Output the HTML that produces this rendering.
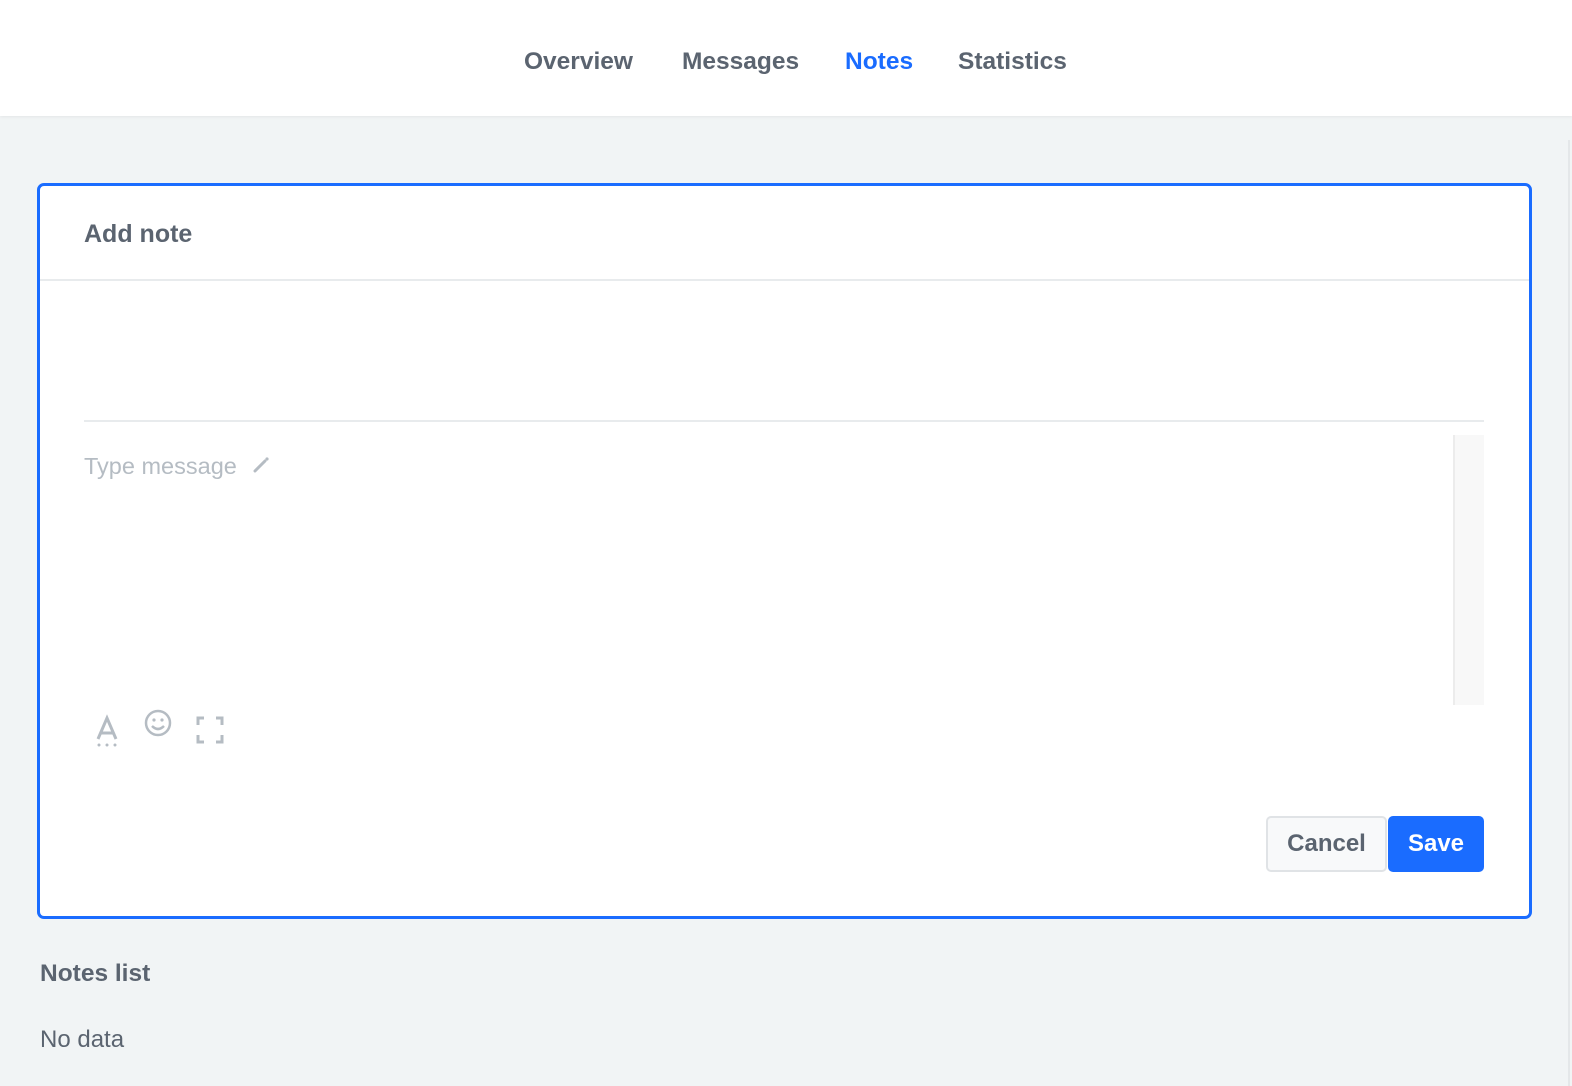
<!DOCTYPE html>
<html><head><meta charset="utf-8"><style>
*{box-sizing:border-box;margin:0;padding:0}
body{width:1572px;height:1086px;background:#f1f4f5;font-family:"Liberation Sans",sans-serif;position:relative;overflow:hidden}
.top{position:absolute;left:0;top:0;width:1572px;height:116px;background:#fff;box-shadow:0 1px 3px rgba(0,0,0,.06)}
.nav{position:absolute;top:48px;font-size:24.5px;font-weight:bold;color:#5b6470;white-space:nowrap}
.card{position:absolute;left:37px;top:183px;width:1495px;height:736px;border:3px solid #1a6cff;border-radius:7px;background:#fff}
.h{position:absolute;left:44px;top:34px;font-size:25px;font-weight:bold;color:#5b6470}
.d1{position:absolute;left:0;right:0;top:93px;height:2px;background:#e8ebed}
.d2{position:absolute;left:44px;right:45px;top:234px;height:2px;background:#e8ebed}
.ph{position:absolute;left:44px;top:267px;font-size:23.5px;color:#b5bcc3}
.scroll{position:absolute;right:45px;top:249px;width:31px;height:270px;background:#f8f8f8;border-left:2px solid #ececec}
.btn{position:absolute;top:630px;height:56px;border-radius:5px;font-size:24px;font-weight:bold;display:flex;align-items:center;justify-content:center}
.cancel{background:#f8f9fa;border:2px solid #e0e3e6;color:#5b6470}
.save{background:#1a6cff;color:#fff}
.sub{position:absolute;left:40px;font-size:24.5px;color:#5b6470}
</style></head><body>
<div class="top">
<span class="nav" style="left:524px">Overview</span>
<span class="nav" style="left:682px">Messages</span>
<span class="nav" style="left:845px;color:#1a6cff">Notes</span>
<span class="nav" style="left:958px">Statistics</span>
</div>
<div style="position:absolute;left:1568px;top:140px;width:2px;height:946px;background:#e4e7e9"></div>
<div class="card">
<div class="h">Add note</div>
<div class="d1"></div>
<div class="d2"></div>
<div class="ph">Type message
<svg width="20" height="20" viewBox="0 0 20 20" style="vertical-align:-1px;margin-left:8px"><path d="M4 16 L14 6" stroke="#b5bcc3" stroke-width="3" stroke-linecap="round"/><circle cx="16" cy="4" r="1.6" fill="#b5bcc3"/></svg></div>
<div class="scroll"></div>
<svg style="position:absolute;left:50px;top:520px" width="150" height="50" viewBox="0 0 150 50">
<g fill="none" stroke="#b5bcc3" stroke-width="3">
<path d="M8 33 L17 12 L26 33 M11 27 L23 27"/>
<circle cx="68" cy="17" r="12" stroke-width="2.5"/>
<path d="M62 20 Q68 26 74 20" stroke-width="2.5"/>
<path d="M108 19 V12 H114 M126 12 H132 V19 M132 29 V36 H126 M114 36 H108 V29"/>
</g>
<g fill="#b5bcc3"><circle cx="9" cy="39" r="1.5"/><circle cx="17" cy="39" r="1.5"/><circle cx="25" cy="39" r="1.5"/><circle cx="64" cy="14" r="1.6"/><circle cx="72" cy="14" r="1.6"/></g>
</svg>
<div class="btn cancel" style="left:1226px;width:121px">Cancel</div>
<div class="btn save" style="left:1348px;width:96px">Save</div>
</div>
<div class="sub" style="top:960px;font-weight:bold">Notes list</div>
<div class="sub" style="top:1026px;font-size:24px">No data</div>
</body></html>
